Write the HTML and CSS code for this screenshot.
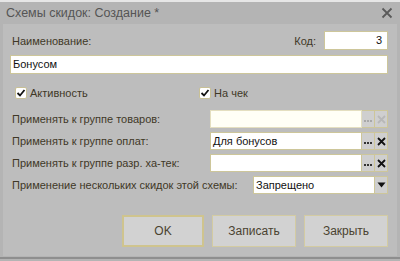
FILE: index.html
```html
<!DOCTYPE html>
<html>
<head>
<meta charset="utf-8">
<link rel="stylesheet" href="styles.css">
</head>
<body>
<div class="topstrip"></div>
<div class="window">
  <div class="titlebar">
    <span class="title">Схемы скидок: Создание *</span>
    <svg class="close" width="12" height="12" viewBox="0 0 12 12"><path d="M1.5 1.5 L10.5 10.5 M10.5 1.5 L1.5 10.5" stroke="#5a5a5a" stroke-width="1.8"/></svg>
  </div>
  <div class="content">
    <div class="row-name">
      <span class="label">Наименование:</span>
      <span class="label code-label">Код:</span>
      <div class="input code">3</div>
    </div>
    <div class="input name">Бонусом</div>
    <div class="row-checks">
      <label class="check"><span class="box"><svg width="10" height="10" viewBox="0 0 10 10"><path d="M1.5 5 L4 7.5 L8.5 2" stroke="#111" stroke-width="1.8" fill="none"/></svg></span>Активность</label>
      <label class="check check2"><span class="box"><svg width="10" height="10" viewBox="0 0 10 10"><path d="M1.5 5 L4 7.5 L8.5 2" stroke="#111" stroke-width="1.8" fill="none"/></svg></span>На чек</label>
    </div>
    <div class="fields">
      <div class="frow">
        <span class="label">Применять к группе товаров:</span>
        <div class="field">
          <div class="input flex disabled"></div>
          <div class="btn dots dim"><i></i><i></i><i></i></div>
          <div class="btn x"><svg width="9" height="9" viewBox="0 0 9 9"><path d="M1 1 L8 8 M8 1 L1 8" stroke="#b8b8b8" stroke-width="1.8"/></svg></div>
        </div>
      </div>
      <div class="frow">
        <span class="label">Применять к группе оплат:</span>
        <div class="field">
          <div class="input flex">Для бонусов</div>
          <div class="btn dots"><i></i><i></i><i></i></div>
          <div class="btn x"><svg width="9" height="9" viewBox="0 0 9 9"><path d="M1 1 L8 8 M8 1 L1 8" stroke="#111" stroke-width="1.8"/></svg></div>
        </div>
      </div>
      <div class="frow">
        <span class="label">Применять к группе разр. ха-тек:</span>
        <div class="field">
          <div class="input flex"></div>
          <div class="btn dots"><i></i><i></i><i></i></div>
          <div class="btn x"><svg width="9" height="9" viewBox="0 0 9 9"><path d="M1 1 L8 8 M8 1 L1 8" stroke="#111" stroke-width="1.8"/></svg></div>
        </div>
      </div>
      <div class="frow">
        <span class="label">Применение нескольких скидок этой схемы:</span>
        <div class="field combo">
          <div class="input flex">Запрещено</div>
          <div class="btn x"><svg width="9" height="6" viewBox="0 0 9 6"><path d="M0.5 0.5 L8.5 0.5 L4.5 5.5 Z" fill="#111"/></svg></div>
        </div>
      </div>
    </div>
    <div class="buttons">
      <div class="button default">OK</div>
      <div class="button">Записать</div>
      <div class="button last">Закрыть</div>
    </div>
  </div>
  <div class="bottom"></div>
</div>
</body>
</html>
```

FILE: styles.css
```css
* { box-sizing: border-box; }
html, body { margin: 0; padding: 0; }
body {
  width: 400px;
  height: 261px;
  overflow: hidden;
  background: #b4b4b4;
  font-family: "Liberation Sans", Arial, sans-serif;
  font-size: 11px;
  color: #3f3827;
}
.topstrip {
  height: 2px;
  background: #e6e6e6;
}
.window {
  display: flex;
  flex-direction: column;
  height: 259px;
  background: #b4b4b4;
}
.titlebar {
  height: 22px;
  display: flex;
  align-items: center;
  justify-content: space-between;
  padding: 0 7px 0 6px;
}
.title {
  font-size: 12.5px;
  color: #555;
}
.close { display: block; }
.content {
  margin: 0 3px;
  height: 232px;
  background: #bdbdbd;
  padding: 7px 9px 0 7px;
  display: flex;
  flex-direction: column;
}
.label {
  color: #3f3827;
  white-space: nowrap;
}
.row-name {
  display: flex;
  align-items: center;
  height: 19px;
  padding-left: 2px;
}
.code-label { margin-left: auto; margin-right: 8px; }
.input {
  background: #fff;
  border: 1px solid #cdc69a;
  height: 19px;
  line-height: 17px;
  padding: 0 2px;
  color: #111;
  font-size: 11px;
  white-space: nowrap;
  overflow: hidden;
}
.code { width: 64px; text-align: right; padding-right: 5px; }
.name { margin-top: 5px; }
.row-checks {
  display: flex;
  margin-top: 12px;
  height: 13px;
  align-items: center;
}
.check {
  display: flex;
  align-items: center;
  gap: 3px;
  padding-left: 5px;
  width: 191px;
  color: #3f3827;
}
.check2 { padding-left: 0; }
.box {
  width: 12px;
  height: 12px;
  border: 1px solid #c8c096;
  border-radius: 2px;
  background: #fff;
  display: flex;
  align-items: center;
  justify-content: center;
}
.fields {
  margin-top: 11px;
  display: flex;
  flex-direction: column;
  gap: 4px;
}
.frow {
  display: flex;
  align-items: center;
  justify-content: space-between;
  height: 18px;
  padding-left: 2px;
}
.field {
  display: flex;
  width: 178px;
  height: 18px;
}
.field.combo { width: 135px; }
.input.flex { flex: 1; height: 18px; line-height: 16px; }
.input.disabled { background: #fffff6; border-color: #e4dfc0; }
.btn {
  width: 13px;
  height: 18px;
  background: #cfcfcf;
  border: 1px solid #cdc69a;
  border-left: none;
  display: flex;
  align-items: center;
  justify-content: center;
}
.dots {
  align-items: flex-end;
  padding-bottom: 5px;
  gap: 1px;
}
.dots i {
  display: block;
  width: 2px;
  height: 2px;
  background: #333;
}
.dots.dim i { background: #a8a8a8; }
.buttons {
  display: flex;
  justify-content: flex-end;
  margin-top: 21px;
  gap: 8px;
}
.button {
  width: 84px;
  height: 32px;
  background: #d2d2d2;
  border: 1px solid #d3cba2;
  display: flex;
  align-items: center;
  justify-content: center;
  font-size: 12px;
  color: #4a4230;
}
.button.default { border: 2px solid #cfc48e; width: 82px; }
.bottom {
  height: 2px;
  background: #8e8e8e;
  margin-top: 1px;
}
```
